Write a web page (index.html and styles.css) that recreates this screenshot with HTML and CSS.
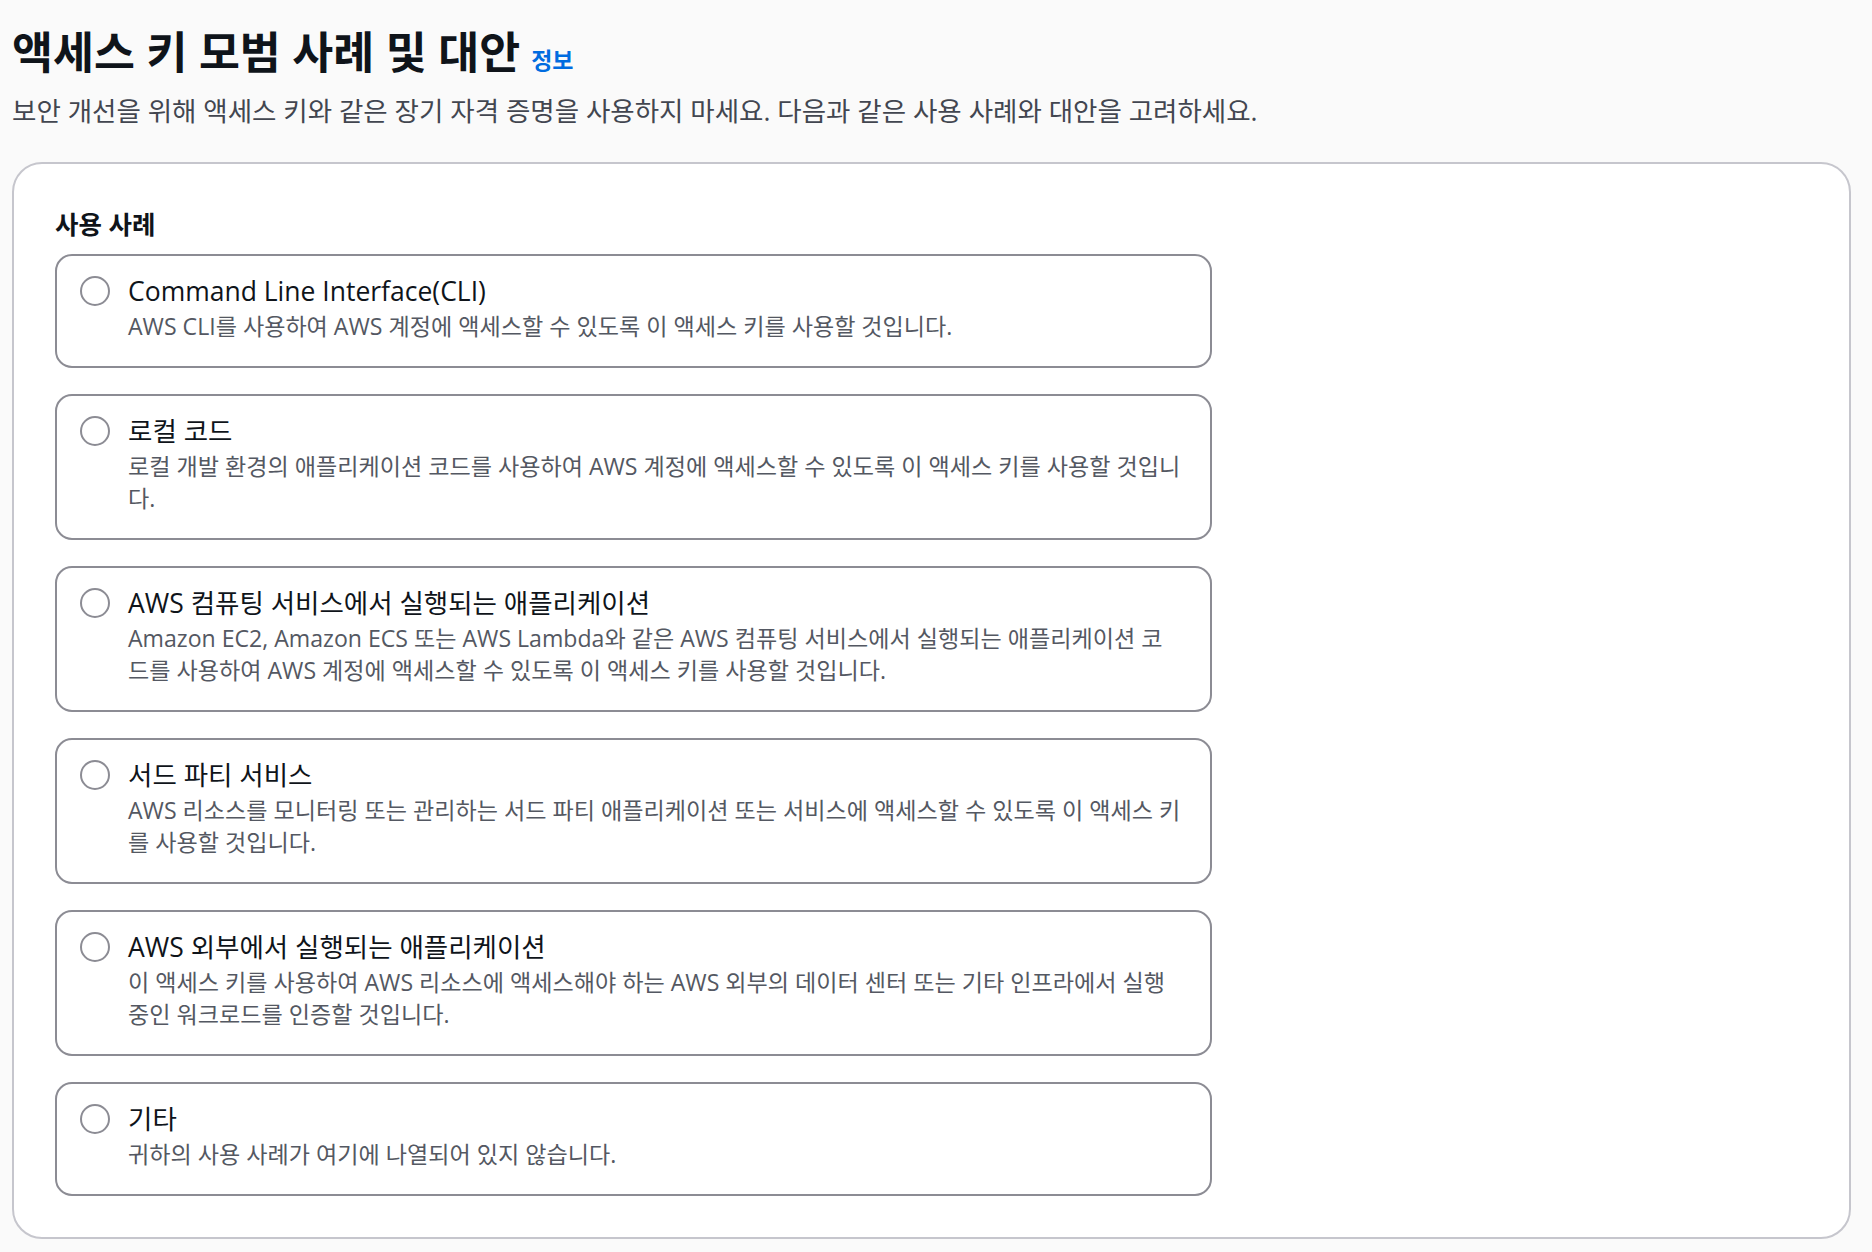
FILE: index.html
```html
<!DOCTYPE html>
<html lang="ko">
<head>
    <meta charset="UTF-8">
    <meta name="viewport" content="width=device-width, initial-scale=1.0">
    <title>액세스 키 모범 사례 및 대안</title>
    <link rel="stylesheet" href="styles.css">
</head>
<body>

<main class="page">
    <header class="page-header">
        <h1 class="page-title">액세스 키 모범 사례 및 대안<a class="info-link" href="#">정보</a></h1>
        <p class="page-desc">보안 개선을 위해 액세스 키와 같은 장기 자격 증명을 사용하지 마세요. 다음과 같은 사용 사례와 대안을 고려하세요.</p>
    </header>

    <section class="panel">
        <h2 class="panel-label">사용 사례</h2>
        <div class="tiles">
            <label class="tile">
                <input type="radio" name="usecase" value="cli">
                <span class="tile-radio"></span>
                <span class="tile-body">
                    <span class="tile-title">Command Line Interface(CLI)</span>
                    <span class="tile-text">AWS CLI를 사용하여 AWS 계정에 액세스할 수 있도록 이 액세스 키를 사용할 것입니다.</span>
                </span>
            </label>
            <label class="tile">
                <input type="radio" name="usecase" value="local">
                <span class="tile-radio"></span>
                <span class="tile-body">
                    <span class="tile-title">로컬 코드</span>
                    <span class="tile-text">로컬 개발 환경의 애플리케이션 코드를 사용하여 AWS 계정에 액세스할 수 있도록 이 액세스 키를 사용할 것입니다.</span>
                </span>
            </label>
            <label class="tile">
                <input type="radio" name="usecase" value="compute">
                <span class="tile-radio"></span>
                <span class="tile-body">
                    <span class="tile-title">AWS 컴퓨팅 서비스에서 실행되는 애플리케이션</span>
                    <span class="tile-text">Amazon EC2, Amazon ECS 또는 AWS Lambda와 같은 AWS 컴퓨팅 서비스에서 실행되는 애플리케이션 코드를 사용하여 AWS 계정에 액세스할 수 있도록 이 액세스 키를 사용할 것입니다.</span>
                </span>
            </label>
            <label class="tile">
                <input type="radio" name="usecase" value="third-party">
                <span class="tile-radio"></span>
                <span class="tile-body">
                    <span class="tile-title">서드 파티 서비스</span>
                    <span class="tile-text">AWS 리소스를 모니터링 또는 관리하는 서드 파티 애플리케이션 또는 서비스에 액세스할 수 있도록 이 액세스 키를 사용할 것입니다.</span>
                </span>
            </label>
            <label class="tile">
                <input type="radio" name="usecase" value="outside">
                <span class="tile-radio"></span>
                <span class="tile-body">
                    <span class="tile-title">AWS 외부에서 실행되는 애플리케이션</span>
                    <span class="tile-text">이 액세스 키를 사용하여 AWS 리소스에 액세스해야 하는 AWS 외부의 데이터 센터 또는 기타 인프라에서 실행 중인 워크로드를 인증할 것입니다.</span>
                </span>
            </label>
            <label class="tile">
                <input type="radio" name="usecase" value="other">
                <span class="tile-radio"></span>
                <span class="tile-body">
                    <span class="tile-title">기타</span>
                    <span class="tile-text">귀하의 사용 사례가 여기에 나열되어 있지 않습니다.</span>
                </span>
            </label>
        </div>
    </section>
</main>

</body>
</html>
```

FILE: styles.css
```css
html, body {
    margin: 0;
    padding: 0;
}
body {
    background-color: #fafafa;
    color: #0f141a;
    font-family: "Open Sans", "Noto Sans CJK KR", sans-serif;
}
.page {
    padding: 26px 21px 0 12px;
}
.page-header {
    margin-bottom: 34px;
}
.page-title {
    margin: 0;
    font-size: 44.5px;
    line-height: 52px;
    font-weight: 700;
    color: #0f141a;
}
.info-link {
    margin-left: 11px;
    font-size: 23px;
    font-weight: 700;
    color: #006ce0;
    text-decoration: none;
}
.page-desc {
    margin: 8px 0 0;
    font-size: 26.5px;
    line-height: 34px;
    color: #424650;
}
.panel {
    background-color: #fff;
    border: 2px solid #c6c6cd;
    border-radius: 30px;
    padding: 44px 41px 41px;
}
.panel-label {
    margin: 0 0 14px;
    font-size: 25.5px;
    line-height: 32px;
    font-weight: 700;
    color: #0f141a;
}
.tiles {
    display: flex;
    flex-direction: column;
    gap: 26px;
    width: 1157px;
}
.tile {
    display: flex;
    align-items: flex-start;
    border: 2px solid #8c8c94;
    border-radius: 17px;
    padding: 17px 27px 24px 23px;
    cursor: pointer;
}
.tile input {
    display: none;
}
.tile-radio {
    flex: none;
    width: 26px;
    height: 26px;
    margin: 3px 18px 0 0;
    border: 2px solid #8c8c94;
    border-radius: 50%;
    background-color: #fff;
}
.tile input:checked + .tile-radio {
    border: 9px solid #006ce0;
    width: 12px;
    height: 12px;
}
.tile-body {
    display: flex;
    flex-direction: column;
}
.tile-title {
    font-size: 26.5px;
    line-height: 36px;
    color: #0f141a;
}
.tile-text {
    margin-top: 1px;
    font-size: 23.1px;
    line-height: 32px;
    color: #545862;
}
```
